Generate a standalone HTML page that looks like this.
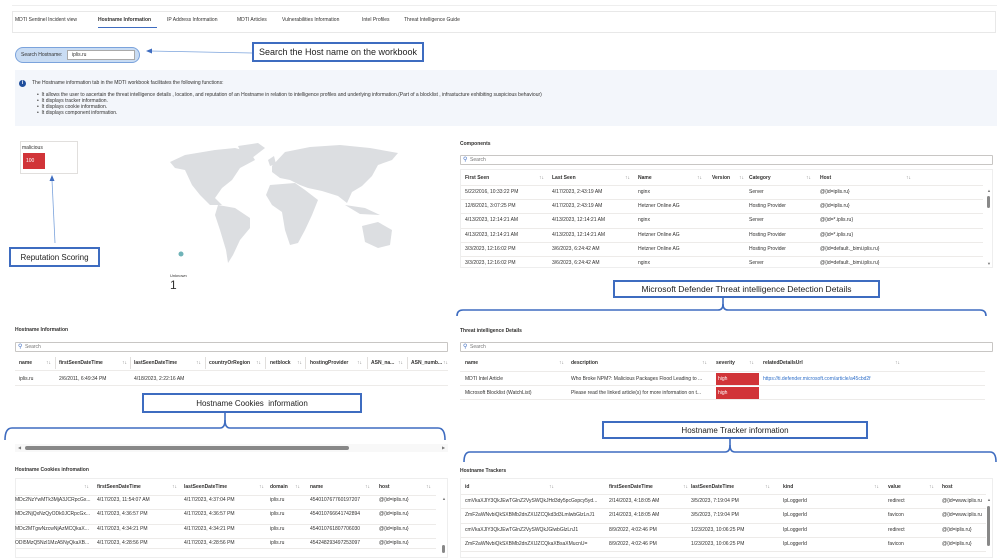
<!DOCTYPE html>
<html><head><meta charset="utf-8"><style>
*{margin:0;padding:0;box-sizing:border-box}
body{width:999px;height:552px;background:#fff;position:relative;overflow:hidden;font-family:"Liberation Sans",sans-serif;color:#323130}
.a{position:absolute;white-space:nowrap}
.t{position:absolute;white-space:nowrap;font-size:5px;line-height:6px;color:#323130}
.s{position:absolute;font-size:5px;line-height:6px;color:#777}
.b{position:absolute;border:1px solid #e1dfdd}
.h{position:absolute;height:1px;background:#edebe9}
.call{position:absolute;border:2px solid #3e6cc0;background:#fff;font-size:9px;color:#222;text-align:center;font-family:"Liberation Sans",sans-serif;display:flex;align-items:center;justify-content:center;white-space:nowrap}
.srch{position:absolute;border:1px solid #c8c6c4;border-radius:1px;font-size:5px;color:#777;padding-left:9px;line-height:9px}
.srch:before{content:"⚲";position:absolute;left:2px;top:0;color:#3e6cc0;font-size:6px}
.red{position:absolute;background:#d13438;color:#fff;font-size:5px}
.lnk{color:#2f6fc9}
.hd{font-weight:600}
</style></head><body>

<div class="h" style="left:12px;top:5px;width:985px;background:#eee"></div>
<div class="b" style="left:12px;top:11px;width:984px;height:22px;border-color:#e8e8e8"></div>
<div class="t" style="left:15px;top:17px">MDTI Sentinel Incident view</div>
<div class="t" style="left:98px;top:17px;font-weight:bold">Hostname Information</div>
<div class="a" style="left:98px;top:27px;width:59px;height:1px;background:#3e6cc0"></div>
<div class="t" style="left:167px;top:17px">IP Address Information</div>
<div class="t" style="left:237px;top:17px">MDTI Articles</div>
<div class="t" style="left:282px;top:17px">Vulnerabilities Information</div>
<div class="t" style="left:362px;top:17px">Intel Profiles</div>
<div class="t" style="left:404px;top:17px">Threat Intelligence Guide</div>

<div class="a" style="left:15px;top:47px;width:125px;height:16px;background:#c9dcf3;border:1px solid #7ba3dc;border-radius:8px"></div>
<div class="t" style="left:21px;top:52px">Search Hostname:</div>
<div class="a" style="left:67px;top:50px;width:68px;height:10px;background:#fff;border:1px solid #aaa"></div>
<div class="t" style="left:72px;top:52px">iplis.ru</div>
<svg class="a" style="left:0;top:0" width="999" height="552">
<line x1="150" y1="51" x2="252" y2="53" stroke="#7ba3dc" stroke-width="0.8"/>
<polygon points="146,51 152,48.5 152,53.5" fill="#3e6cc0"/>
<line x1="52" y1="180" x2="55" y2="243" stroke="#7ba3dc" stroke-width="0.8"/>
<polygon points="52,175 49.5,181 54.5,181" fill="#3e6cc0"/>
<g fill="none" stroke="#3e6cc0" stroke-width="1.6">
<path d="M457,316 Q457,310 463,310 L718,310 Q723,310 723,304 Q723,310 728,310 L980,310 Q986,310 986,316"/>
<line x1="723" y1="298" x2="723" y2="306"/>
<path d="M5,440 Q5,428 12,428 L220,428 Q225,428 225,420 Q225,428 230,428 L438,428 Q445,428 445,440"/>
<line x1="225" y1="413" x2="225" y2="422"/>
<path d="M464,462 Q464,452 470,452 L725,452 Q730,452 730,445 Q730,452 735,452 L990,452 Q996,452 996,462"/>
<line x1="730" y1="438" x2="730" y2="447"/>
</g>
<g fill="#dcdee1">
<polygon points="170,162 185,155 215,150 235,148 250,152 255,160 240,168 232,180 222,188 215,198 222,205 210,205 200,195 192,185 185,170 175,168"/>
<polygon points="238,146 258,143 265,148 252,158 242,155"/>
<polygon points="218,205 235,208 250,218 250,228 240,240 233,255 228,263 226,250 220,230 215,215"/>
<polygon points="272,166 285,152 310,147 340,145 370,148 398,153 392,160 378,165 372,176 362,186 352,192 347,203 338,196 322,191 308,188 300,185 290,180 280,178 272,172"/>
<polygon points="270,185 295,183 305,190 318,200 312,215 305,230 298,243 290,245 285,230 282,212 272,205 266,195"/>
<polygon points="362,226 378,222 392,230 390,245 378,248 365,242"/>
<polygon points="345,205 365,208 380,215 360,214"/>
<polygon points="268,160 274,156 276,164 270,166"/>
</g>
<circle cx="181" cy="254" r="2.5" fill="#6fb3b8"/>
</svg>
<div class="call" style="left:252px;top:42px;width:172px;height:20px;font-size:9px">Search the Host name on the workbook</div>

<div class="a" style="left:15px;top:70px;width:982px;height:56px;background:#f3f6fb"></div>
<div class="a" style="left:19px;top:80px;width:7px;height:7px;border-radius:50%;background:#1f4e9c;color:#fff;font-size:5px;text-align:center;line-height:7px;font-weight:bold">i</div>
<div class="t" style="left:32px;top:80px">The Hostname information tab in the MDTI workbook facilitates the following functions:</div>
<div class="t" style="left:37px;top:92px">•&nbsp; It allows the user to ascertain the threat intelligence details , location, and reputation of an Hostname in relation to intelligence profiles and underlying information.(Part of a blocklist , infrastucture exhibiting suspicious behaviour)</div>
<div class="t" style="left:37px;top:98px">•&nbsp; It displays tracker information.</div>
<div class="t" style="left:37px;top:104px">•&nbsp; It displays cookie information.</div>
<div class="t" style="left:37px;top:110px">•&nbsp; It displays component information.</div>

<div class="b" style="left:20px;top:141px;width:58px;height:33px"></div>
<div class="t" style="left:22px;top:145px">malicious</div>
<div class="red" style="left:23px;top:153px;width:22px;height:16px;line-height:16px;padding-left:3px">100</div>
<div class="call" style="left:9px;top:247px;width:91px;height:20px;font-size:8px">Reputation Scoring</div>
<div class="t" style="left:170px;top:273px;font-size:4px">Unknown</div>
<div class="a" style="left:170px;top:279px;font-size:12px;line-height:13px">1</div>

<div class="t hd" style="left:460px;top:141px">Components</div>
<div class="srch" style="left:460px;top:155px;width:533px;height:10px">Search</div>
<div class="b" style="left:460px;top:169px;width:533px;height:99px;border-color:#eee"></div>
<div class="t hd" style="left:465px;top:175px">First Seen</div><div class="s" style="left:539px;top:175px">↑↓</div>
<div class="t hd" style="left:552px;top:175px">Last Seen</div><div class="s" style="left:625px;top:175px">↑↓</div>
<div class="t hd" style="left:638px;top:175px">Name</div><div class="s" style="left:697px;top:175px">↑↓</div>
<div class="t hd" style="left:712px;top:175px">Version</div><div class="s" style="left:739px;top:175px">↑↓</div>
<div class="t hd" style="left:749px;top:175px">Category</div><div class="s" style="left:806px;top:175px">↑↓</div>
<div class="t hd" style="left:820px;top:175px">Host</div><div class="s" style="left:906px;top:175px">↑↓</div>
<div class="h" style="left:461px;top:185px;width:522px"></div>
<div class="h" style="left:461px;top:199px;width:522px"></div>
<div class="h" style="left:461px;top:213px;width:522px"></div>
<div class="h" style="left:461px;top:228px;width:522px"></div>
<div class="h" style="left:461px;top:242px;width:522px"></div>
<div class="h" style="left:461px;top:256px;width:522px"></div>
<div class="t" style="left:465px;top:189px">5/22/2016, 10:33:22 PM</div><div class="t" style="left:552px;top:189px">4/17/2023, 2:43:19 AM</div><div class="t" style="left:638px;top:189px">nginx</div><div class="t" style="left:749px;top:189px">Server</div><div class="t" style="left:820px;top:189px">@{id=iplis.ru}</div>
<div class="t" style="left:465px;top:203px">12/8/2021, 3:07:25 PM</div><div class="t" style="left:552px;top:203px">4/17/2023, 2:43:19 AM</div><div class="t" style="left:638px;top:203px">Hetzner Online AG</div><div class="t" style="left:749px;top:203px">Hosting Provider</div><div class="t" style="left:820px;top:203px">@{id=iplis.ru}</div>
<div class="t" style="left:465px;top:217px">4/13/2023, 12:14:21 AM</div><div class="t" style="left:552px;top:217px">4/13/2023, 12:14:21 AM</div><div class="t" style="left:638px;top:217px">nginx</div><div class="t" style="left:749px;top:217px">Server</div><div class="t" style="left:820px;top:217px">@{id=*.iplis.ru}</div>
<div class="t" style="left:465px;top:232px">4/13/2023, 12:14:21 AM</div><div class="t" style="left:552px;top:232px">4/13/2023, 12:14:21 AM</div><div class="t" style="left:638px;top:232px">Hetzner Online AG</div><div class="t" style="left:749px;top:232px">Hosting Provider</div><div class="t" style="left:820px;top:232px">@{id=*.iplis.ru}</div>
<div class="t" style="left:465px;top:246px">3/3/2023, 12:16:02 PM</div><div class="t" style="left:552px;top:246px">3/6/2023, 6:24:42 AM</div><div class="t" style="left:638px;top:246px">Hetzner Online AG</div><div class="t" style="left:749px;top:246px">Hosting Provider</div><div class="t" style="left:820px;top:246px">@{id=default._bimi.iplis.ru}</div>
<div class="t" style="left:465px;top:260px">3/3/2023, 12:16:02 PM</div><div class="t" style="left:552px;top:260px">3/6/2023, 6:24:42 AM</div><div class="t" style="left:638px;top:260px">nginx</div><div class="t" style="left:749px;top:260px">Server</div><div class="t" style="left:820px;top:260px">@{id=default._bimi.iplis.ru}</div>
<div class="s" style="left:987px;top:188px;font-size:4px">▲</div>
<div class="a" style="left:987px;top:196px;width:3px;height:12px;background:#888;border-radius:2px"></div>
<div class="s" style="left:987px;top:261px;font-size:4px">▼</div>

<div class="call" style="left:613px;top:280px;width:267px;height:18px;font-size:8.5px">Microsoft Defender Threat intelligence Detection Details</div>

<div class="t hd" style="left:15px;top:327px">Hostname Information</div>
<div class="srch" style="left:15px;top:342px;width:433px;height:10px">Search</div>
<div class="t hd" style="left:19px;top:360px">name</div><div class="s" style="left:46px;top:360px">↑↓</div>
<div class="t hd" style="left:59px;top:360px">firstSeenDateTime</div><div class="s" style="left:122px;top:360px">↑↓</div>
<div class="t hd" style="left:134px;top:360px">lastSeenDateTime</div><div class="s" style="left:196px;top:360px">↑↓</div>
<div class="t hd" style="left:209px;top:360px">countryOrRegion</div><div class="s" style="left:256px;top:360px">↑↓</div>
<div class="t hd" style="left:270px;top:360px">netblock</div><div class="s" style="left:297px;top:360px">↑↓</div>
<div class="t hd" style="left:310px;top:360px">hostingProvider</div><div class="s" style="left:357px;top:360px">↑↓</div>
<div class="t hd" style="left:371px;top:360px">ASN_na...</div><div class="s" style="left:398px;top:360px">↑↓</div>
<div class="t hd" style="left:411px;top:360px">ASN_numb...</div><div class="s" style="left:443px;top:360px">↑↓</div>
<div class="a" style="left:55px;top:357px;width:1px;height:12px;background:#e1dfdd"></div>
<div class="a" style="left:130px;top:357px;width:1px;height:12px;background:#e1dfdd"></div>
<div class="a" style="left:205px;top:357px;width:1px;height:12px;background:#e1dfdd"></div>
<div class="a" style="left:265px;top:357px;width:1px;height:12px;background:#e1dfdd"></div>
<div class="a" style="left:305px;top:357px;width:1px;height:12px;background:#e1dfdd"></div>
<div class="a" style="left:367px;top:357px;width:1px;height:12px;background:#e1dfdd"></div>
<div class="a" style="left:407px;top:357px;width:1px;height:12px;background:#e1dfdd"></div>
<div class="h" style="left:15px;top:370px;width:433px"></div>
<div class="t" style="left:19px;top:376px">iplis.ru</div><div class="t" style="left:59px;top:376px">2/6/2011, 6:49:34 PM</div><div class="t" style="left:134px;top:376px">4/18/2023, 2:22:16 AM</div>
<div class="h" style="left:15px;top:385px;width:433px"></div>
<div class="call" style="left:142px;top:393px;width:220px;height:20px;font-size:8px">Hostname Cookies&nbsp; information</div>
<div class="a" style="left:15px;top:444px;width:433px;height:8px;background:#f8f8f8"></div>
<div class="s" style="left:18px;top:445px;font-size:4px">◀</div>
<div class="a" style="left:25px;top:446px;width:324px;height:4px;background:#888;border-radius:2px"></div>
<div class="s" style="left:442px;top:445px;font-size:4px">▶</div>

<div class="t hd" style="left:460px;top:328px">Threat intelligence Details</div>
<div class="srch" style="left:460px;top:342px;width:533px;height:10px">Search</div>
<div class="t hd" style="left:465px;top:360px">name</div><div class="s" style="left:559px;top:360px">↑↓</div>
<div class="t hd" style="left:571px;top:360px">description</div><div class="s" style="left:702px;top:360px">↑↓</div>
<div class="t hd" style="left:716px;top:360px">severity</div><div class="s" style="left:749px;top:360px">↑↓</div>
<div class="t hd" style="left:763px;top:360px">relatedDetailsUrl</div><div class="s" style="left:895px;top:360px">↑↓</div>
<div class="h" style="left:460px;top:371px;width:525px"></div>
<div class="h" style="left:460px;top:385px;width:525px"></div>
<div class="h" style="left:460px;top:399px;width:525px"></div>
<div class="t" style="left:465px;top:376px">MDTI Intel Article</div><div class="t" style="left:571px;top:376px">Who Broke NPM?: Malicious Packages Flood Leading to ...</div>
<div class="red" style="left:716px;top:373px;width:43px;height:12px;line-height:12px;padding-left:2px">high</div>
<div class="t lnk" style="left:763px;top:376px">https://ti.defender.microsoft.com/article/a45cbd2f</div>
<div class="t" style="left:465px;top:390px">Microsoft Blocklist (WatchList)</div><div class="t" style="left:571px;top:390px">Please read the linked article(s) for more information on t...</div>
<div class="red" style="left:716px;top:387px;width:43px;height:12px;line-height:12px;padding-left:2px">high</div>
<div class="call" style="left:602px;top:421px;width:266px;height:18px;font-size:8px">Hostname Tracker information</div>

<div class="t hd" style="left:15px;top:467px">Hostname Cookies infromation</div>
<div class="b" style="left:15px;top:478px;width:433px;height:80px;border-color:#eee"></div>
<div class="s" style="left:84px;top:484px">↑↓</div>
<div class="t hd" style="left:97px;top:484px">firstSeenDateTime</div><div class="s" style="left:172px;top:484px">↑↓</div>
<div class="t hd" style="left:184px;top:484px">lastSeenDateTime</div><div class="s" style="left:259px;top:484px">↑↓</div>
<div class="t hd" style="left:270px;top:484px">domain</div><div class="s" style="left:295px;top:484px">↑↓</div>
<div class="t hd" style="left:310px;top:484px">name</div><div class="s" style="left:365px;top:484px">↑↓</div>
<div class="t hd" style="left:379px;top:484px">host</div><div class="s" style="left:426px;top:484px">↑↓</div>
<div class="h" style="left:16px;top:495px;width:420px"></div>
<div class="h" style="left:16px;top:509px;width:420px"></div>
<div class="h" style="left:16px;top:524px;width:420px"></div>
<div class="h" style="left:16px;top:538px;width:420px"></div>
<div class="h" style="left:16px;top:548px;width:420px"></div>
<div class="t" style="left:15px;top:497px">MDc2NzYwMTk3MjA3JCRpcGx...</div><div class="t" style="left:97px;top:497px">4/17/2023, 11:54:07 AM</div><div class="t" style="left:184px;top:497px">4/17/2023, 4:37:04 PM</div><div class="t" style="left:270px;top:497px">iplis.ru</div><div class="t" style="left:310px;top:497px">454010767760197207</div><div class="t" style="left:379px;top:497px">@{id=iplis.ru}</div>
<div class="t" style="left:15px;top:511px">MDc2NjQxNzQyODk0JCRpcGx...</div><div class="t" style="left:97px;top:511px">4/17/2023, 4:36:57 PM</div><div class="t" style="left:184px;top:511px">4/17/2023, 4:36:57 PM</div><div class="t" style="left:270px;top:511px">iplis.ru</div><div class="t" style="left:310px;top:511px">454010766641742894</div><div class="t" style="left:379px;top:511px">@{id=iplis.ru}</div>
<div class="t" style="left:15px;top:526px">MDc2MTgwNzcwNjAzMCQkaX...</div><div class="t" style="left:97px;top:526px">4/17/2023, 4:34:21 PM</div><div class="t" style="left:184px;top:526px">4/17/2023, 4:34:21 PM</div><div class="t" style="left:270px;top:526px">iplis.ru</div><div class="t" style="left:310px;top:526px">454010761807706030</div><div class="t" style="left:379px;top:526px">@{id=iplis.ru}</div>
<div class="t" style="left:15px;top:540px">ODI5MzQ5NzI1MzA5NyQkaXB...</div><div class="t" style="left:97px;top:540px">4/17/2023, 4:28:56 PM</div><div class="t" style="left:184px;top:540px">4/17/2023, 4:28:56 PM</div><div class="t" style="left:270px;top:540px">iplis.ru</div><div class="t" style="left:310px;top:540px">454248293497253097</div><div class="t" style="left:379px;top:540px">@{id=iplis.ru}</div>
<div class="s" style="left:442px;top:496px;font-size:4px">▲</div>
<div class="a" style="left:442px;top:545px;width:3px;height:8px;background:#888;border-radius:2px"></div>

<div class="t hd" style="left:460px;top:468px">Hostname Trackers</div>
<div class="b" style="left:460px;top:478px;width:533px;height:80px;border-color:#eee"></div>
<div class="t hd" style="left:465px;top:484px">id</div><div class="s" style="left:549px;top:484px">↑↓</div>
<div class="t hd" style="left:609px;top:484px">firstSeenDateTime</div><div class="s" style="left:683px;top:484px">↑↓</div>
<div class="t hd" style="left:691px;top:484px">lastSeenDateTime</div><div class="s" style="left:765px;top:484px">↑↓</div>
<div class="t hd" style="left:783px;top:484px">kind</div><div class="s" style="left:874px;top:484px">↑↓</div>
<div class="t hd" style="left:888px;top:484px">value</div><div class="s" style="left:929px;top:484px">↑↓</div>
<div class="t hd" style="left:942px;top:484px">host</div>
<div class="h" style="left:461px;top:494px;width:525px"></div>
<div class="h" style="left:461px;top:508px;width:525px"></div>
<div class="h" style="left:461px;top:523px;width:525px"></div>
<div class="h" style="left:461px;top:537px;width:525px"></div>
<div class="h" style="left:461px;top:551px;width:525px"></div>
<div class="t" style="left:465px;top:498px">cmVkaXJlY3QkJEwTGlnZ2VySWQkJHd3dy5pcGxpcy5yd...</div><div class="t" style="left:609px;top:498px">2/14/2023, 4:18:05 AM</div><div class="t" style="left:691px;top:498px">3/5/2023, 7:19:04 PM</div><div class="t" style="left:783px;top:498px">IpLoggerId</div><div class="t" style="left:888px;top:498px">redirect</div><div class="t" style="left:942px;top:498px">@{id=www.iplis.ru</div>
<div class="t" style="left:465px;top:512px">ZmF2aWNvbiQkSXBMb2dnZXIJZCQkd3d3LmlwbGlzLnJ1</div><div class="t" style="left:609px;top:512px">2/14/2023, 4:18:05 AM</div><div class="t" style="left:691px;top:512px">3/5/2023, 7:19:04 PM</div><div class="t" style="left:783px;top:512px">IpLoggerId</div><div class="t" style="left:888px;top:512px">favicon</div><div class="t" style="left:942px;top:512px">@{id=www.iplis.ru</div>
<div class="t" style="left:465px;top:527px">cmVkaXJlY3QkJEwTGlnZ2VySWQkJGlwbGlzLnJ1</div><div class="t" style="left:609px;top:527px">8/9/2022, 4:02:46 PM</div><div class="t" style="left:691px;top:527px">1/23/2023, 10:06:25 PM</div><div class="t" style="left:783px;top:527px">IpLoggerId</div><div class="t" style="left:888px;top:527px">redirect</div><div class="t" style="left:942px;top:527px">@{id=iplis.ru}</div>
<div class="t" style="left:465px;top:541px">ZmF2aWNvbiQkSXBMb2dnZXIJZCQkaXBsaXMucnU=</div><div class="t" style="left:609px;top:541px">8/9/2022, 4:02:46 PM</div><div class="t" style="left:691px;top:541px">1/23/2023, 10:06:25 PM</div><div class="t" style="left:783px;top:541px">IpLoggerId</div><div class="t" style="left:888px;top:541px">favicon</div><div class="t" style="left:942px;top:541px">@{id=iplis.ru}</div>
<div class="s" style="left:987px;top:497px;font-size:4px">▲</div>
<div class="a" style="left:987px;top:506px;width:3px;height:40px;background:#888;border-radius:2px"></div>
</body></html>
